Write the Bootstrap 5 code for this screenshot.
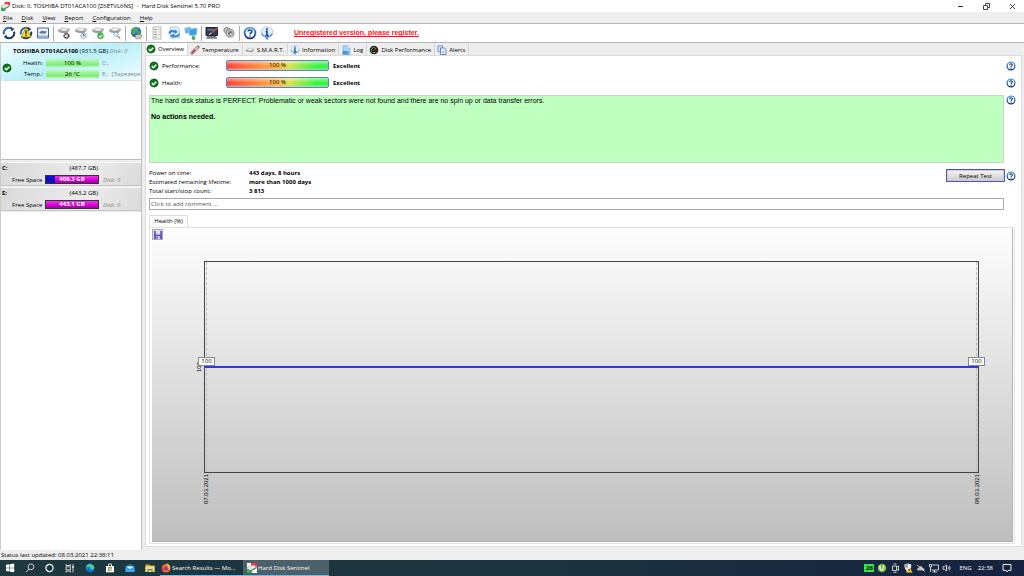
<!DOCTYPE html>
<html lang="en">
<head>
<meta charset="utf-8">
<meta name="viewport" content="width=device-width, initial-scale=1">
<title>Hard Disk Sentinel 5.70 PRO</title>
<link rel="stylesheet" href="https://cdn.jsdelivr.net/npm/bootstrap@5.3.0/dist/css/bootstrap.min.css">
<style>
body{font:6px/8px "Open Sans","Noto Sans",sans-serif;color:#000;background:#eee}
button{border:0;padding:0;background:none;color:inherit;font:inherit}
svg{display:block;flex:none}
.i10{width:10px;height:10px}
.i14{width:14px;height:14px}
.titlebar{height:12px;background:#fff;padding-left:1px;gap:2px}
.titlebar svg{width:9px;height:9px}
.wbtn{width:24px;height:12px;display:grid;place-items:center}
.wbtn svg{width:7px;height:7px}
.menubar{height:11px;gap:9px;padding-left:3px}
.menubar u{text-underline-offset:1px}
.toolbar{height:20px;background:#fff;border-top:1px solid #b4b4b4;border-bottom:1px solid #b4b4b4}
.tool{width:17px;height:18px;display:grid;place-items:center}
.sep{width:1px;height:15px;background:#aaa;margin:0 1px 0 2px}
.register{font:bold 7px/10px "Liberation Sans",Arial,sans-serif;color:#f11;margin-left:19px}
.side{width:142px;border-right:1px solid #c2c2c2;border-left:1px solid #ccc}
.disks{height:117px;background:#fff;border-bottom:1px solid #bbb;margin-bottom:2px}
.disk{height:38px;padding:4px 0 0 1px;background:linear-gradient(160deg,#e9fbff 10%,#b8f0fb 50%,#effcff 100%);border-bottom:1px solid #d5e4e8}
.disk-title{padding-left:11px;height:10px}
.lab{width:31px;text-align:right}
.lab-wide{width:42px;text-align:right;margin-right:1px}
.disk-row{height:11px;gap:3px}
.meter{width:53px;height:8px;text-align:center;background:linear-gradient(#c0fbb9,#7deb78 70%,#b4f5af)}
.dim{color:#888}
.drive{height:24px;margin-bottom:1px;padding:1px 0 0 1px;background:linear-gradient(115deg,#d9d9d9,#ececec 60%,#dadada);border-top:1px solid #f8f8f8;border-bottom:1px solid #c5c5c5}
.drive-head{height:11px}
.drive-head b{width:43px}
.drive-head span{width:53px;text-align:right}
.space{width:54px;height:9px;border:1px solid #333;color:#fff;font-weight:700;text-align:center;line-height:7px;background:linear-gradient(#e93ae9,#d400d4 60%,#a500a5);position:relative}
.space i{position:absolute;left:0;top:0;bottom:0;background:#1010c8}
.space span{position:relative}
.main-pane{margin:0 2px 3px 3px;min-width:0}
.tabs{height:12px}
.tab{height:11px;display:flex;align-items:center;gap:2px;padding:0 3px 0 2px;border-right:1px solid #d5d5d5;margin-top:1px}
.tab.on{height:12px;margin-top:0;background:#fff;border-left:1px solid #ddd;padding-left:0}
.page{background:#fff;border:1px solid #dcdcdc;padding:1px 0 2px 3px}
.rate{height:17px;padding-right:5px}
.rate .nm{width:64px;margin-left:3px}
.rbar{width:103px;height:11px;border:1px solid #5e87b5;border-radius:2px;text-align:center;line-height:9px;margin-right:4px;background:linear-gradient(rgba(255,255,255,.55),rgba(255,255,255,.05) 50%,rgba(255,255,255,.05) 75%,rgba(190,210,240,.8)),linear-gradient(90deg,#ff3b30,#ffb038 50%,#d8e040 62%,#2ef53a 88%)}
.status{height:68px;background:#bfffbf;border:1px solid #ccd6cc;padding:1px;font:7px/8px "Liberation Sans",Arial,sans-serif;margin-top:4px}
.sidehelp{width:17px;padding:4px 0 0 2px}
.facts{height:35px;padding:6px 5px 0 0}
.facts dl{display:grid;grid-template-columns:100px auto;grid-auto-rows:8px;row-gap:1px;margin:0;align-self:start}
.facts dd{font-weight:700;margin:0}
.facts dt{font-weight:400}
.repeat{width:59px;height:13px;border:1px solid #5555a8;background:linear-gradient(#f8f8f8,#ddd 60%,#c8c8c8);box-shadow:inset 0 0 0 1px #ccd;margin-right:1px}
.comment-row{padding-right:17px}
.comment{height:12px;width:100%;border:1px solid #aaa;padding:0 1px;font-size:6px;line-height:8px;border-radius:0;background:#fff;display:block}
.comment::placeholder{color:#555;opacity:1}
.gtab{width:39px;height:12px;border:1px solid #ddd;border-bottom:0;text-align:center;line-height:11px;background:#fff;margin-top:5px}
.graph-frame{border:1px solid #e2e2e2;margin-right:6px;padding:0 1px 1px 2px}
.graph{background:linear-gradient(#fefefe,#bebebe);border-right:1px solid #b4b4b4;border-bottom:1px solid #b0b0b0}
.save{margin:1px 0 0;width:11px;height:11px;border:1px solid #aaa;background:#ddd;display:grid;place-items:center}
.save svg{width:8px;height:8px}
.plot{margin:21px 33px 68px 52px;border:1px solid #444;position:relative}
.plot:before{content:"";position:absolute;inset:0 1px;border:dashed #bbb;border-width:0 1px}
.series{position:absolute;left:0;right:0;top:50%;height:2px;margin-top:-1px;background:#33f}
.pt{position:absolute;top:50%;width:17px;height:9px;margin-top:-10px;background:#fff;border:1px solid #888;text-align:center;line-height:7px}
.pt.l{left:-7px}
.pt.r{right:-7px}
.vert{position:absolute;writing-mode:vertical-rl;transform:rotate(180deg);font:6px/8px "Liberation Sans",Arial,sans-serif;white-space:nowrap}
.xl{top:100%;margin-top:2px}
.xl.first{left:-3px}
.xl.last{right:-3px}
.yl{left:-10px;top:50%;margin-top:-5px}
.status-line{height:10px;padding-left:1px;line-height:11px}
.taskbar{height:16px;background:linear-gradient(90deg,#1e3840,#1b343f 50%,#16223f);color:#fff}
.tk{width:20px;height:16px;display:grid;place-items:center}
.task{width:83px;height:16px;display:flex;align-items:center;gap:1px;padding-left:1px;border-bottom:1px solid #79b8e8;white-space:nowrap}
.task.current{width:86px;background:#4b6069;padding-left:4px}
.tray{gap:3px;padding-right:12px}
.clock{margin:0 6px 0 3px}
.cnt{background:#39e24b;color:#000;width:10px;height:8px;line-height:8px;font-weight:700;text-align:center}
</style>
</head>
<body class="d-flex flex-column min-vh-100">
<svg width="0" height="0" class="position-absolute" aria-hidden="true">
<defs>
<radialGradient id="gb" cx=".4" cy=".3" r=".8"><stop offset="0" stop-color="#6fb6ee"/><stop offset=".6" stop-color="#2161b8"/><stop offset="1" stop-color="#0d2f7c"/></radialGradient>
<linearGradient id="gd" x2="0" y2="1"><stop stop-color="#eee"/><stop offset="1" stop-color="#888"/></linearGradient>
<linearGradient id="gh" x2="0" y2="1"><stop stop-color="#4aa3ea"/><stop offset="1" stop-color="#0d2f80"/></linearGradient>
</defs>
<symbol id="ok" viewBox="0 0 10 10"><circle cx="5" cy="5" r="4.3" fill="#0b7a1c"/><circle cx="5" cy="5" r="4" fill="none" stroke="#0a4d14" stroke-width=".6"/><path d="M2.8 5.1l1.6 1.6L7.3 3.7" fill="none" stroke="#fff" stroke-width="1.5"/></symbol>
<symbol id="help" viewBox="0 0 14 14"><circle cx="7" cy="7" r="5.4" fill="#fff" stroke="url(#gh)" stroke-width="1.8"/><path d="M5.1 5.6C5.1 3.5 8.9 3.5 8.9 5.5 8.9 6.9 7 6.9 7 8.6M7 9.4v1.4" fill="none" stroke="#123f94" stroke-width="1.5"/></symbol>
<symbol id="info" viewBox="0 0 14 14"><path d="M7 .8a5.6 5.2 0 0 1 1.8 10.2L7 13.6 5.4 11A5.6 5.2 0 0 1 7 .8z" fill="#e4f0fb" stroke="#a9c4e2" stroke-width=".8"/><path d="M1.8 7.5a5 4 0 0 0 3.7 3L7 13l1.4-2.5a5 4 0 0 0 3.8-3" fill="none" stroke="#4a8bd0" stroke-width="1.2"/><path d="M7 2.2v1.8M5.6 5.3H7v4.2M5.4 9.6h3.3" stroke="#1248a5" stroke-width="1.7" fill="none"/></symbol>
<symbol id="sync" viewBox="0 0 14 14"><path d="M2 8.4A5.1 5.1 0 0 1 9.7 2.7" fill="none" stroke="#2d6fb4" stroke-width="2"/><path d="M12 5.6A5.1 5.1 0 0 1 4.3 11.3" fill="none" stroke="#173c6c" stroke-width="2"/><path d="M8.6.8l3.8 2.1-3 2.6zM5.4 13.2L1.6 11.1l3-2.6z" fill="#1b4580"/></symbol>
<symbol id="hdd" viewBox="0 0 14 14"><path d="M1 4.2l4-2.5 7.8 1.2-2.6 3.5-6.8-.6z" fill="url(#gd)" stroke="#999" stroke-width=".5"/><path d="M1 4.2l2.4 1.6 6.8.6 2.6-3.5v.9l-2.7 3.5-6.9-.8L1 5z" fill="#888"/><ellipse cx="7" cy="3.6" rx="2.8" ry="1.2" fill="#f4f4f4"/></symbol>
<symbol id="hds" viewBox="0 0 10 10"><path d="M4 0h6v4H4z" fill="#f33"/><path d="M0 6h5v4H0z" fill="#2bb84a"/><path d="M0 4.5l6.500-2.500L9.500 4 3 7.500z" fill="#eee" stroke="#888" stroke-width=".5"/><path d="M3 7.500L9.500 4v1.400L3 8.800z" fill="#777"/></symbol>
</svg>

<header>
<div class="titlebar d-flex align-items-center">
<svg viewBox="0 0 10 10"><use href="#hds"/></svg>
<span class="me-auto">Disk: 0, TOSHIBA DT01ACA100 [Z6ETVL6NS]&nbsp; -&nbsp; Hard Disk Sentinel 5.70 PRO</span>
<button class="wbtn" aria-label="Minimize"><svg><path d="M1 3.5h5" stroke="#333"/></svg></button>
<button class="wbtn" aria-label="Restore"><svg fill="none" stroke="#333"><path d="M.5 2.5h4v4h-4zM2.5 2V.5h4v4H5" stroke-width=".9"/></svg></button>
<button class="wbtn" aria-label="Close"><svg><path d="M1 1l5 5M6 1L1 6" stroke="#333" stroke-width=".9"/></svg></button>
</div>
<nav class="menubar d-flex align-items-center"><button><u>F</u>ile</button><button><u>D</u>isk</button><button><u>V</u>iew</button><button><u>R</u>eport</button><button><u>C</u>onfiguration</button><button><u>H</u>elp</button></nav>
<div class="toolbar d-flex align-items-center">
<button class="tool" aria-label="Refresh"><svg class="i14"><use href="#sync"/></svg></button>
<button class="tool" aria-label="Refresh problems"><svg class="i14" viewBox="0 0 14 14"><use href="#sync"/><path d="M7 1.5l5 9.5H2z" fill="#ffdf20" stroke="#927a10" stroke-width=".7"/><path d="M7 4.5v3.4M7 8.8V10" stroke="#111" stroke-width="1.3"/></svg></button>
<button class="tool" aria-label="Panel"><svg class="i14" viewBox="0 0 14 14"><path d="M1.5 2h11v10h-11z" fill="#e9f2fb" stroke="#3a689c"/><path d="M2 9.500h10v2H2z" fill="#8fb3d8"/><path d="M3 6.300l3-1.500 5 .7-1.800 2.200-4.800-.2z" fill="#777"/></svg></button>
<span class="sep"></span>
<button class="tool" aria-label="Test settings"><svg class="i14" viewBox="0 0 14 14"><use href="#hdd"/><circle cx="9.5" cy="9.8" r="2.3" fill="#ddd" stroke="#333" stroke-width="1.6" stroke-dasharray="1.4 .5"/></svg></button>
<button class="tool" aria-label="Short test"><svg class="i14" viewBox="0 0 14 14"><use href="#hdd"/><circle cx="9.5" cy="9.8" r="2.6" fill="#e5f4ff" stroke="#9ab"/><path d="M9.5 8v2l1.4-1" stroke="#268" fill="none" stroke-width=".8"/></svg></button>
<button class="tool" aria-label="Surface test"><svg class="i14" viewBox="0 0 14 14"><use href="#hdd"/><circle cx="9.5" cy="9.8" r="3.2" fill="#35b445"/><path d="M7.8 9.8l1.4 1.4 2.2-2.6" stroke="#fff" fill="none" stroke-width="1.1"/></svg></button>
<button class="tool" aria-label="Find"><svg class="i14" viewBox="0 0 14 14"><use href="#hdd"/><circle cx="8" cy="8.4" r="2.2" fill="#d9f1ff" stroke="#8ac" stroke-width=".8"/><path d="M9.8 10.2l2.4 2.4" stroke="#b97b3c" stroke-width="1.3"/></svg></button>
<span class="sep"></span>
<button class="tool" aria-label="Web"><svg class="i14" viewBox="0 0 14 14"><circle cx="7" cy="6" r="5.2" fill="url(#gb)"/><path d="M3 3l4-1.5L8.5 4 6 6.5 4.2 9 2.3 6zM9 5l3 .6-1 3.4-2-1z" fill="#4bae3e"/><path d="M6 9.3l3-1 4 1.5-1.3 2.6-4.700.6z" fill="#ccc" stroke="#777" stroke-width=".6"/></svg></button>
<span class="sep"></span>
<button class="tool" aria-label="Report"><svg class="i14" viewBox="0 0 14 14"><path d="M3 1h8v12H3z" fill="#f7f7ee" stroke="#aaa" stroke-width=".8"/><path d="M4.5 3.5h2M4.5 6h2M4.5 8.5h2M4.5 11h2" stroke="#678"/><path d="M7.5 3.5H10M7.5 6H10M7.5 8.5H10" stroke="#ccc"/></svg></button>
<button class="tool" aria-label="Send report"><svg class="i14" viewBox="0 0 14 14"><path d="M3.5 1h7l2 2v9h-9z" fill="#e4f1fd" stroke="#8dbbe4" stroke-width=".7"/><path d="M1.5 7.5c0-3.7 4.2-4 6-2.7V3.2L11 6 7.5 8V6.6C5.5 5.8 3.8 6.1 3.3 7.8zM12.8 7.6c0 3.7-4.2 4.2-6 3.1v1.6L3 9.8l3.800-2.300V9c2 1 3.700.4 4.200-1.200z" fill="#2b83dc"/></svg></button>
<button class="tool" aria-label="Network"><svg class="i14" viewBox="0 0 14 14"><path d="M.8 2.2l6-1v5.500l-5.400.5z" fill="#62b9f0" stroke="#97b4cc" stroke-width=".8"/><path d="M5 3.500l8-1.500-.6 7-6.700.4z" fill="#38a0ea" stroke="#8fb6d3" stroke-width=".8"/><path d="M8.500 9.500l1 2.200" stroke="#999" stroke-width="1.8"/><circle cx="9.5" cy="12" r="1.9" fill="#49ad57"/></svg></button>
<span class="sep"></span>
<button class="tool" aria-label="Configuration"><svg class="i14" viewBox="0 0 14 14"><path d="M1 1.5h11.5v8H1z" fill="#333c52" stroke="#223"/><path d="M2.5 10h8.5l1.5 2.8H1z" fill="#777e90"/><path d="M2.5 3h6v1.5h-6z" fill="#63789f"/><path d="M5 8l7.5-6" stroke="#d4552c" stroke-width="1.5"/><path d="M4 9l2-2" stroke="#eee"/></svg></button>
<button class="tool" aria-label="Sound"><svg class="i14" viewBox="0 0 14 14"><ellipse cx="5.8" cy="5" rx="4.4" ry="3.2" transform="rotate(35 5.8 5)" fill="#bbb" stroke="#777" stroke-width=".7"/><circle cx="8" cy="7.2" r="4" fill="#ccc" stroke="#777" stroke-width=".8"/><circle cx="8.3" cy="7.3" r="2.2" fill="#777"/><circle cx="9" cy="8" r="1" fill="#ddd"/></svg></button>
<span class="sep"></span>
<button class="tool" aria-label="Help"><svg class="i14"><use href="#help"/></svg></button>
<button class="tool" aria-label="Information"><svg class="i14"><use href="#info"/></svg></button>
<a href="#" class="register">Unregistered version, please register.</a>
</div>
</header>

<main class="d-flex flex-grow-1">
<aside class="side d-flex flex-column flex-shrink-0">
<div class="disks">
<div class="disk">
<div class="disk-title text-nowrap"><b>TOSHIBA DT01ACA100</b> (931,5 GB) <i class="dim">Disk: 0</i></div>
<div class="d-flex align-items-center"><svg class="i10"><use href="#ok"/></svg>
<div>
<div class="disk-row d-flex align-items-center"><span class="lab">Health:</span><span class="meter">100 %</span><span class="dim">C:,</span></div>
<div class="disk-row d-flex align-items-center text-nowrap"><span class="lab">Temp.:</span><span class="meter">26 °C</span><span class="dim">E:,&nbsp; [Зарезере</span></div>
</div></div>
</div>
</div>
<div class="drive"><div class="drive-head d-flex"><b>C:</b><span>(487,7 GB)</span></div><div class="d-flex align-items-center"><span class="lab-wide">Free Space&nbsp;</span><div class="space"><i style="width:17%"></i><span>406.3 GB</span></div><i class="dim ms-1">Disk: 0</i></div></div>
<div class="drive"><div class="drive-head d-flex"><b>E:</b><span>(443,2 GB)</span></div><div class="d-flex align-items-center"><span class="lab-wide">Free Space&nbsp;</span><div class="space"><span>443.1 GB</span></div><i class="dim ms-1">Disk: 0</i></div></div>
<div class="bg-white flex-grow-1"></div>
</aside>

<section class="main-pane flex-grow-1 d-flex flex-column">
<nav class="tabs d-flex">
<button class="tab on"><svg class="i10"><use href="#ok"/></svg>Overview</button>
<button class="tab"><svg class="i10" viewBox="0 0 10 10"><path d="M2 8l6-6" stroke="#7b5560" stroke-width="3" stroke-linecap="round"/><path d="M2 8l5.6-5.6" stroke="#f2c9d4" stroke-width="1.7" stroke-linecap="round"/><path d="M2 8l3-3" stroke="#d2224a" stroke-width="1.1"/></svg>Temperature</button>
<button class="tab"><svg class="i10" viewBox="0 -3 14 14"><use href="#hdd" width="14" height="14"/></svg>S.M.A.R.T.</button>
<button class="tab"><svg class="i10"><use href="#info"/></svg>Information</button>
<button class="tab"><svg class="i10" viewBox="0 0 10 10"><path d="M2 .8h5l2 2v6.700H2z" fill="#a8d3f5" stroke="#7ab0dd" stroke-width=".7"/><path d="M7 .8v2h2" fill="#eef"/><path d="M1.5 6h6v3.500h-6z" fill="#4a97da"/></svg>Log</button>
<button class="tab"><svg class="i10" viewBox="0 0 10 10"><circle cx="5" cy="5" r="4.3" fill="#222"/><path d="M2.5 6.500a3 3 0 0 1 3.500-4" stroke="#35c44b" fill="none"/><path d="M5 5.500L7 3" stroke="#f44"/><path d="M3.500 7.500h3" stroke="#4c5"/></svg>Disk Performance</button>
<button class="tab"><svg class="i10" viewBox="0 0 10 10"><path d="M1 .8h4.500v6H1z" fill="#dcecfb" stroke="#4a7fbe" stroke-width=".8"/><path d="M3.500 3h4l1.500 1.600v4.900H3.500z" fill="#eef6ff" stroke="#3a6cb0" stroke-width=".8"/><path d="M5 6h2.600M5 7.700h2.600" stroke="#7aa6d8" stroke-width=".7"/></svg>Alerts</button>
</nav>
<div class="page flex-grow-1 d-flex flex-column">
<div class="rate d-flex align-items-center"><svg class="i10"><use href="#ok"/></svg><span class="nm">Performance:</span><div class="rbar">100 %</div><b class="me-auto">Excellent</b><button aria-label="Help: performance"><svg class="i10"><use href="#help"/></svg></button></div>
<div class="rate d-flex align-items-center"><svg class="i10"><use href="#ok"/></svg><span class="nm">Health:</span><div class="rbar">100 %</div><b class="me-auto">Excellent</b><button aria-label="Help: health"><svg class="i10"><use href="#help"/></svg></button></div>
<div class="d-flex">
<div class="status flex-grow-1">The hard disk status is PERFECT. Problematic or weak sectors were not found and there are no spin up or data transfer errors.<br><br><b>No actions needed.</b></div>
<div class="sidehelp flex-shrink-0"><button aria-label="Help: status"><svg class="i10"><use href="#help"/></svg></button></div>
</div>
<div class="facts d-flex justify-content-between"><dl><dt>Power on time:</dt><dd>443 days, 8 hours</dd><dt>Estimated remaining lifetime:</dt><dd>more than 1000 days</dd><dt>Total start/stop count:</dt><dd>3 813</dd></dl>
<div class="d-flex align-items-center align-self-start"><button class="repeat">Repeat Test</button><button aria-label="Help: repeat test"><svg class="i10"><use href="#help"/></svg></button></div></div>
<div class="comment-row"><input class="comment" type="text" aria-label="Comment" placeholder="Click to add comment ..."></div>
<button class="gtab">Health (%)</button>
<div class="graph-frame flex-grow-1 d-flex flex-column">
<div class="graph flex-grow-1 d-flex flex-column">
<button class="save" aria-label="Save graph"><svg viewBox="0 0 9 9"><path d="M0 0h9v9H0z" fill="#6a52c4"/><path d="M2 0h5v4H2zM2.500 6h4v3h-4z" fill="#e4e0f8"/><path d="M3 6.500h1.200V9H3z" fill="#5b43b8"/></svg></button>
<div class="plot flex-grow-1">
<span class="series"></span>
<span class="vert yl">100</span>
<span class="pt l">100</span><span class="pt r">100</span>
<span class="vert xl first">07.03.2021</span><span class="vert xl last">08.03.2021</span>
</div>
</div></div>
</div>
</section>
</main>
<div class="status-line">Status last updated: 08.03.2021 22:38:11</div>
<footer class="taskbar d-flex align-items-center">
<button class="tk" aria-label="Start"><svg class="i10" viewBox="0 0 10 10"><path d="M1 1.800l3.500-.5v3.400H1zM5 1.200L9.200.6v4.100H5zM1 5.200h3.500v3.400L1 8.100zM5 5.200h4.200v4.100L5 8.700z" fill="#fff"/></svg></button>
<button class="tk" aria-label="Search"><svg class="i10" viewBox="0 0 10 10"><circle cx="6" cy="3.800" r="2.900" fill="none" stroke="#ddd" stroke-width=".9"/><path d="M4 6L1 9.200" stroke="#ddd"/></svg></button>
<button class="tk" aria-label="Cortana"><svg class="i10" viewBox="0 0 10 10"><circle cx="4.500" cy="5" r="3.600" fill="none" stroke="#fff" stroke-width="1.200"/></svg></button>
<button class="tk" aria-label="Task view"><svg class="i10" viewBox="0 0 10 10"><path d="M1 1v1.500h4.500V1M1 3.800h4.500v3H1zM1 9.500V8h4.500v1.500M8 1v8.500" stroke="#ddd" fill="none" stroke-width=".9"/><path d="M7.400 3h1.200v2H7.400z" fill="#fff"/></svg></button>
<button class="tk" aria-label="Edge"><svg class="i10" viewBox="0 0 10 10"><circle cx="5" cy="5" r="4.400" fill="#1b86d8"/><path d="M.8 4C1.700.6 8 0 9.300 4c.3 2-2.400 2.800-3.600 1.800C6.200 4 3.400 3 .8 4z" fill="#4bd28c"/><path d="M3.700 5c-.3 2.400 2 4 4.600 2.800-1.400 1.800-5.200 2.200-6-1" fill="#1258a8"/></svg></button>
<button class="tk" aria-label="Store"><svg class="i10" viewBox="0 0 10 10"><path d="M1 3h8v6.300H1z" fill="#fff"/><path d="M3.500 3V1h3v2" stroke="#fff" fill="none" stroke-width=".8"/><path d="M3 4h1.700v1.700H3z" fill="#f25022"/><path d="M5.200 4H7v1.700H5.200z" fill="#7fba00"/><path d="M3 6.200h1.700V8H3z" fill="#00a4ef"/><path d="M5.200 6.200H7V8H5.200z" fill="#ffb900"/></svg></button>
<button class="tk" aria-label="Mail"><svg class="i10" viewBox="0 0 10 10"><path d="M.5 3.500L5 .8l4.500 2.700V9h-9z" fill="#1479c8"/><path d="M1 3.500h8L5 6.300z" fill="#fff"/><path d="M.5 4L5 7l4.500-3v5h-9z" fill="#3ba7ec"/></svg></button>
<button class="tk" aria-label="Explorer"><svg class="i10" viewBox="0 0 10 10"><path d="M.5 1.500h3.500l1 1h4.500V9h-9z" fill="#e0a526"/><path d="M.5 3.300h9V9h-9z" fill="#ffdc6b"/><path d="M2.500 6h5v3H6.500V7.300h-3V9h-1z" fill="#2c87d2"/></svg></button>
<button class="task"><svg class="i10" viewBox="0 0 10 10"><circle cx="5" cy="5.300" r="4.300" fill="#ff6a1f"/><path d="M5.500.3C9 1.500 10 5 8.500 7.500 8.300 4 6 3.500 5.500.3z" fill="#ffd03c"/><circle cx="5" cy="5.500" r="2" fill="#7b3be0"/><path d="M1 3c1 3 3 3 4.500 2C4.500 8 2 8 1 6z" fill="#f5304f"/></svg>Search Results — Mo...</button>
<button class="task current"><svg class="i10" viewBox="0 0 10 10"><path d="M0 0h10v10H0z" fill="#fff"/><use href="#hds"/></svg>Hard Disk Sentinel</button>
<div class="tray d-flex align-items-center ms-auto">
<span class="cnt">26</span>
<svg class="i10" viewBox="0 0 10 10"><circle cx="5" cy="5" r="4.300" fill="#6cc02e"/><path d="M3 2.500v2.800c0 2.200 3.500 2.200 3.500 0V2.500" stroke="#fff" stroke-width="1.400" fill="none"/></svg>
<svg class="i10" viewBox="0 0 10 10" fill="none" stroke="#ddd" stroke-width=".9"><path d="M2.500 3h4v4.500h-4zM6.500 4.200L8.500 3v4.500l-2-1.200M3.500 1h3M3.500 9.300h3"/></svg>
<svg class="i10" viewBox="0 0 10 10"><path d="M1.500 1.500L5 .5l3.300 1C8.300 6 7 8 5 9 3 8 1.500 6 1.500 1.500z" fill="#eee"/><path d="M5 .5v4.300H1.700C1.500 4 1.500 2.500 1.500 1.500z" fill="#aaa"/><path d="M6.300 4.500l3.300 5H3z" fill="#ffc928"/><path d="M6.300 6v2" stroke="#111" stroke-width=".8"/></svg>
<svg class="i10" viewBox="0 0 10 10"><path d="M1.500 7.500c-1-2 .5-3 1.500-2.700C3.500 2.500 6.500 3 6.700 5c2 0 2.300 2.500.8 2.500z" fill="#bbb"/><path d="M1 2l8 6.500" stroke="#ddd" stroke-width=".9"/></svg>
<svg class="i10" viewBox="0 0 10 10" fill="none" stroke="#ddd" stroke-width=".9"><path d="M2.500 2h7v5h-7M5.500 7v2M3.500 9h4.500M.5 1.500h2V4h-2zM1.500 4v5"/></svg>
<svg class="i10" viewBox="0 0 10 10" fill="none" stroke="#ddd" stroke-width=".9"><path d="M1 3.700h1.500L4.500 2v6L2.500 6.300H1zM6 3.700q1 1.300 0 2.600M7.300 2.700q1.700 2.300 0 4.600"/></svg>
<span class="ms-1">ENG</span><span class="clock">22:38</span>
<button aria-label="Notifications"><svg class="i10" viewBox="0 0 10 10"><path d="M1 1.500h8v5.800H6.300L5 9 3.800 7.300H1z" fill="none" stroke="#eee"/></svg></button>
</div>
</footer>
<script src="https://cdn.jsdelivr.net/npm/bootstrap@5.3.0/dist/js/bootstrap.bundle.min.js"></script>
</body>
</html>
